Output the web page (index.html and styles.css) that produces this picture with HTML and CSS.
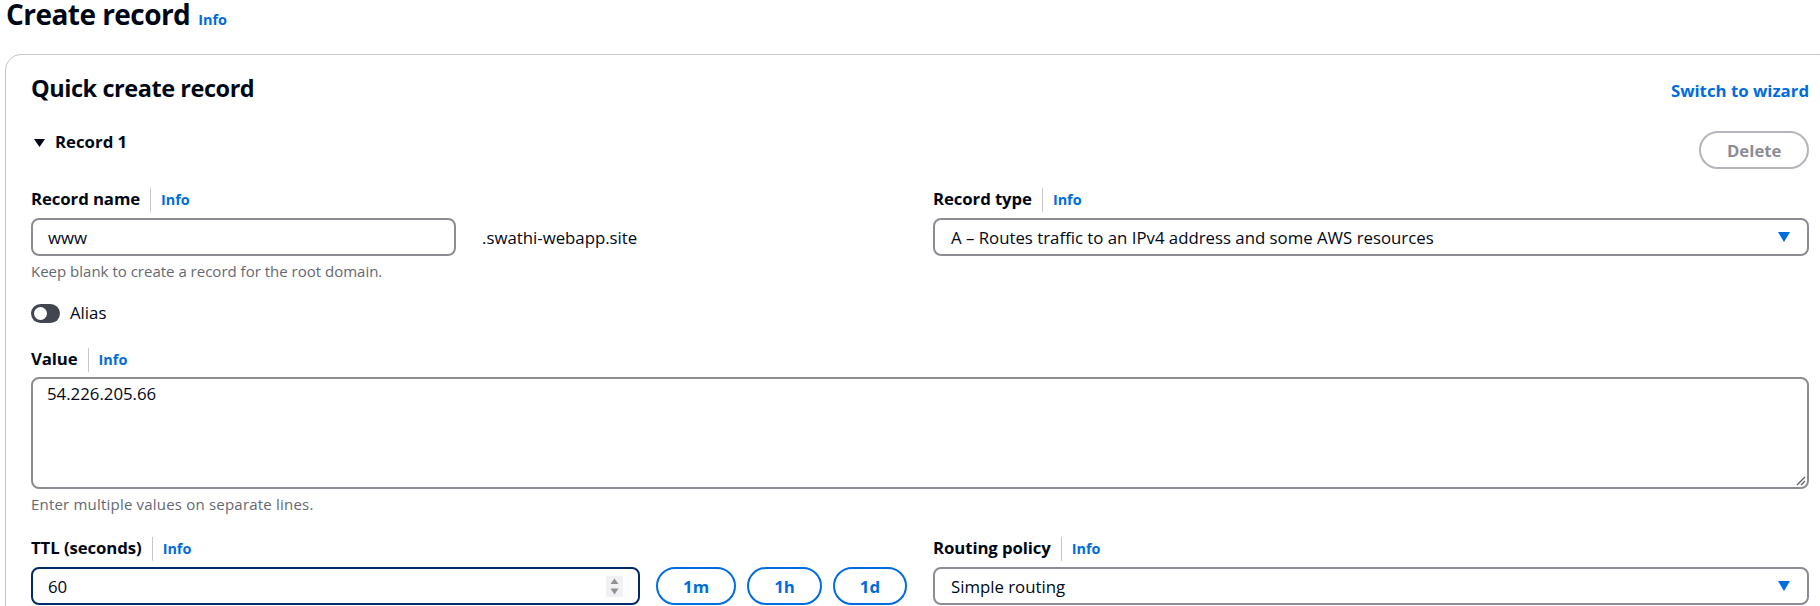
FILE: index.html
```html
<!DOCTYPE html>
<html lang="en">
<head>
<meta charset="utf-8">
<title>Create record</title>
<link rel="stylesheet" href="styles.css">
</head>
<body>
<div class="page">
  <div class="page-head">
    <h1 class="title">Create record</h1>
    <a class="info-title">Info</a>
  </div>

  <section class="card">
    <div class="card-head">
      <h2 class="card-title">Quick create record</h2>
      <a class="link-strong">Switch to wizard</a>
    </div>

    <div class="record-head">
      <div class="expander">
        <svg class="expander-caret" width="14" height="14" viewBox="0 0 14 14"><path d="M3 4h11l-5.5 8z" fill="#000716"/></svg>
        <span>Record 1</span>
      </div>
      <button class="btn-disabled" type="button">Delete</button>
    </div>

    <div class="two-col row-first">
      <div class="field">
        <div class="label-row"><span class="label">Record name</span><a class="info">Info</a></div>
        <div class="name-row control">
          <div class="input name-input">www</div>
          <span class="suffix">.swathi-webapp.site</span>
        </div>
        <div class="hint">Keep blank to create a record for the root domain.</div>
      </div>
      <div class="field">
        <div class="label-row"><span class="label">Record type</span><a class="info">Info</a></div>
        <div class="select control">
          <span>A – Routes traffic to an IPv4 address and some AWS resources</span>
          <svg class="select-caret" width="12" height="10" viewBox="0 0 12 10"><path d="M0 0h12l-6 10z" fill="#006ce0"/></svg>
        </div>
      </div>
    </div>

    <div class="toggle-row">
      <span class="toggle"><span class="knob"></span></span>
      <span class="toggle-label">Alias</span>
    </div>

    <div class="field value-field">
      <div class="label-row"><span class="label">Value</span><a class="info">Info</a></div>
      <div class="textarea control-tight">
        <span>54.226.205.66</span>
        <svg class="grip" width="10" height="10" viewBox="0 0 10 10"><path d="M9 1L1 9M9 5L5 9" stroke="#5f6066" stroke-width="1.3" fill="none"/></svg>
      </div>
      <div class="hint hint-wide">Enter multiple values on separate lines.</div>
    </div>

    <div class="two-col row-last">
      <div class="field">
        <div class="label-row"><span class="label">TTL (seconds)</span><a class="info">Info</a></div>
        <div class="ttl-row control">
          <div class="input ttl-input">
            <span>60</span>
            <svg class="spinner" width="17" height="21" viewBox="0 0 17 21"><rect width="17" height="21" fill="#f1f1f3"/><path d="M4.5 8L8.5 2.5L12.5 8z" fill="#8f8f97"/><path d="M4.5 12.5L8.5 18.5L12.5 12.5z" fill="#8f8f97"/></svg>
          </div>
          <div class="quick-buttons">
            <button class="btn-outline" type="button">1m</button>
            <button class="btn-outline" type="button">1h</button>
            <button class="btn-outline" type="button">1d</button>
          </div>
        </div>
      </div>
      <div class="field">
        <div class="label-row"><span class="label">Routing policy</span><a class="info">Info</a></div>
        <div class="select control">
          <span>Simple routing</span>
          <svg class="select-caret" width="12" height="10" viewBox="0 0 12 10"><path d="M0 0h12l-6 10z" fill="#006ce0"/></svg>
        </div>
      </div>
    </div>
  </section>
</div>
</body>
</html>
```

FILE: styles.css
```css
* {
  box-sizing: border-box;
  margin: 0;
  padding: 0;
}

html, body {
  width: 1820px;
  height: 606px;
  overflow: hidden;
  background: #ffffff;
}

body {
  font-family: "Open Sans", "Noto Sans", sans-serif;
  color: #000716;
  font-size: 16.8px;
}

.page {
  width: 1840px;
  padding-left: 5px;
}

.page-head {
  display: flex;
  align-items: baseline;
  gap: 8px;
  padding-left: 1px;
  height: 28px;
}

.title {
  font-size: 28px;
  line-height: 29px;
  font-weight: 700;
  letter-spacing: -0.55px;
}

.info-title {
  font-size: 14.4px;
  font-weight: 700;
  color: #006ce0;
}

.card {
  margin-top: 26px;
  width: 1830px;
  border: 1px solid #c6c6cd;
  border-radius: 16px;
  padding: 18px 25px 40px;
}

.card-head {
  display: flex;
  justify-content: space-between;
  align-items: baseline;
  width: 1778px;
}

.card-title {
  font-size: 23.5px;
  line-height: 30px;
  font-weight: 700;
  letter-spacing: -0.45px;
}

.link-strong {
  font-size: 16.8px;
  font-weight: 700;
  color: #006ce0;
}

.record-head {
  display: flex;
  justify-content: space-between;
  align-items: flex-start;
  margin-top: 28px;
  width: 1778px;
}

.expander {
  display: flex;
  align-items: center;
  gap: 10px;
  font-size: 16.8px;
  font-weight: 700;
  line-height: 22px;
}

.expander-caret {
  display: block;
}

.btn-disabled {
  height: 38px;
  padding: 0 25.5px;
  border: 2px solid #b4b4bb;
  border-radius: 20px;
  background: #ffffff;
  color: #8c8c94;
  font-family: inherit;
  font-size: 16.8px;
  font-weight: 700;
}

.two-col {
  display: grid;
  grid-template-columns: 876px 876px;
  column-gap: 26px;
  width: 1778px;
}

.row-first {
  margin-top: 19px;
}

.row-last {
  margin-top: 23px;
}

.label-row {
  display: flex;
  align-items: baseline;
  height: 22px;
  line-height: 22px;
}

.label {
  font-size: 16.8px;
  font-weight: 700;
  letter-spacing: -0.1px;
}

.info {
  margin-left: 10px;
  padding-left: 10px;
  border-left: 1px solid #c6c6cd;
  font-size: 14.4px;
  font-weight: 700;
  color: #006ce0;
  line-height: 24px;
}

.control {
  margin-top: 8px;
}

.control-tight {
  margin-top: 7px;
}

.input {
  height: 38px;
  border: 2px solid #8c8c94;
  border-radius: 8px;
  padding: 0 15px;
  display: flex;
  align-items: center;
  font-size: 16.8px;
}

.name-row {
  display: flex;
  align-items: center;
  gap: 26px;
}

.name-input {
  width: 425px;
}

.suffix {
  font-size: 16.8px;
}

.hint {
  margin-top: 6px;
  font-size: 15px;
  line-height: 19px;
  color: #656871;
}

.hint-wide {
  letter-spacing: 0.2px;
}

.select {
  height: 38px;
  border: 2px solid #8c8c94;
  border-radius: 8px;
  padding: 0 17px 0 16px;
  display: flex;
  align-items: center;
  justify-content: space-between;
  font-size: 16.8px;
}

.select-caret {
  display: block;
}

.toggle-row {
  margin-top: 21px;
  display: flex;
  align-items: center;
  gap: 10px;
  line-height: 22px;
}

.toggle {
  width: 29px;
  height: 19px;
  border-radius: 10px;
  background: #424650;
  display: flex;
  align-items: center;
  padding-left: 3px;
}

.knob {
  width: 13px;
  height: 13px;
  border-radius: 50%;
  background: #ffffff;
}

.toggle-label {
  font-size: 16.8px;
}

.value-field {
  margin-top: 24px;
  width: 1778px;
}

.textarea {
  position: relative;
  height: 112px;
  border: 2px solid #8c8c94;
  border-radius: 8px;
  padding: 4px 14px;
  font-size: 16.8px;
  line-height: 22px;
}

.grip {
  position: absolute;
  right: 1px;
  bottom: 1px;
}

.ttl-row {
  display: flex;
  align-items: center;
}

.ttl-input {
  flex: 1;
  border-color: #002b66;
  justify-content: space-between;
  margin-right: 16px;
}

.spinner {
  display: block;
}

.quick-buttons {
  display: flex;
  gap: 11px;
}

.btn-outline {
  height: 38px;
  padding: 0 25px;
  border: 2px solid #006ce0;
  border-radius: 20px;
  background: #ffffff;
  color: #006ce0;
  font-family: inherit;
  font-size: 16.8px;
  font-weight: 700;
}
```
